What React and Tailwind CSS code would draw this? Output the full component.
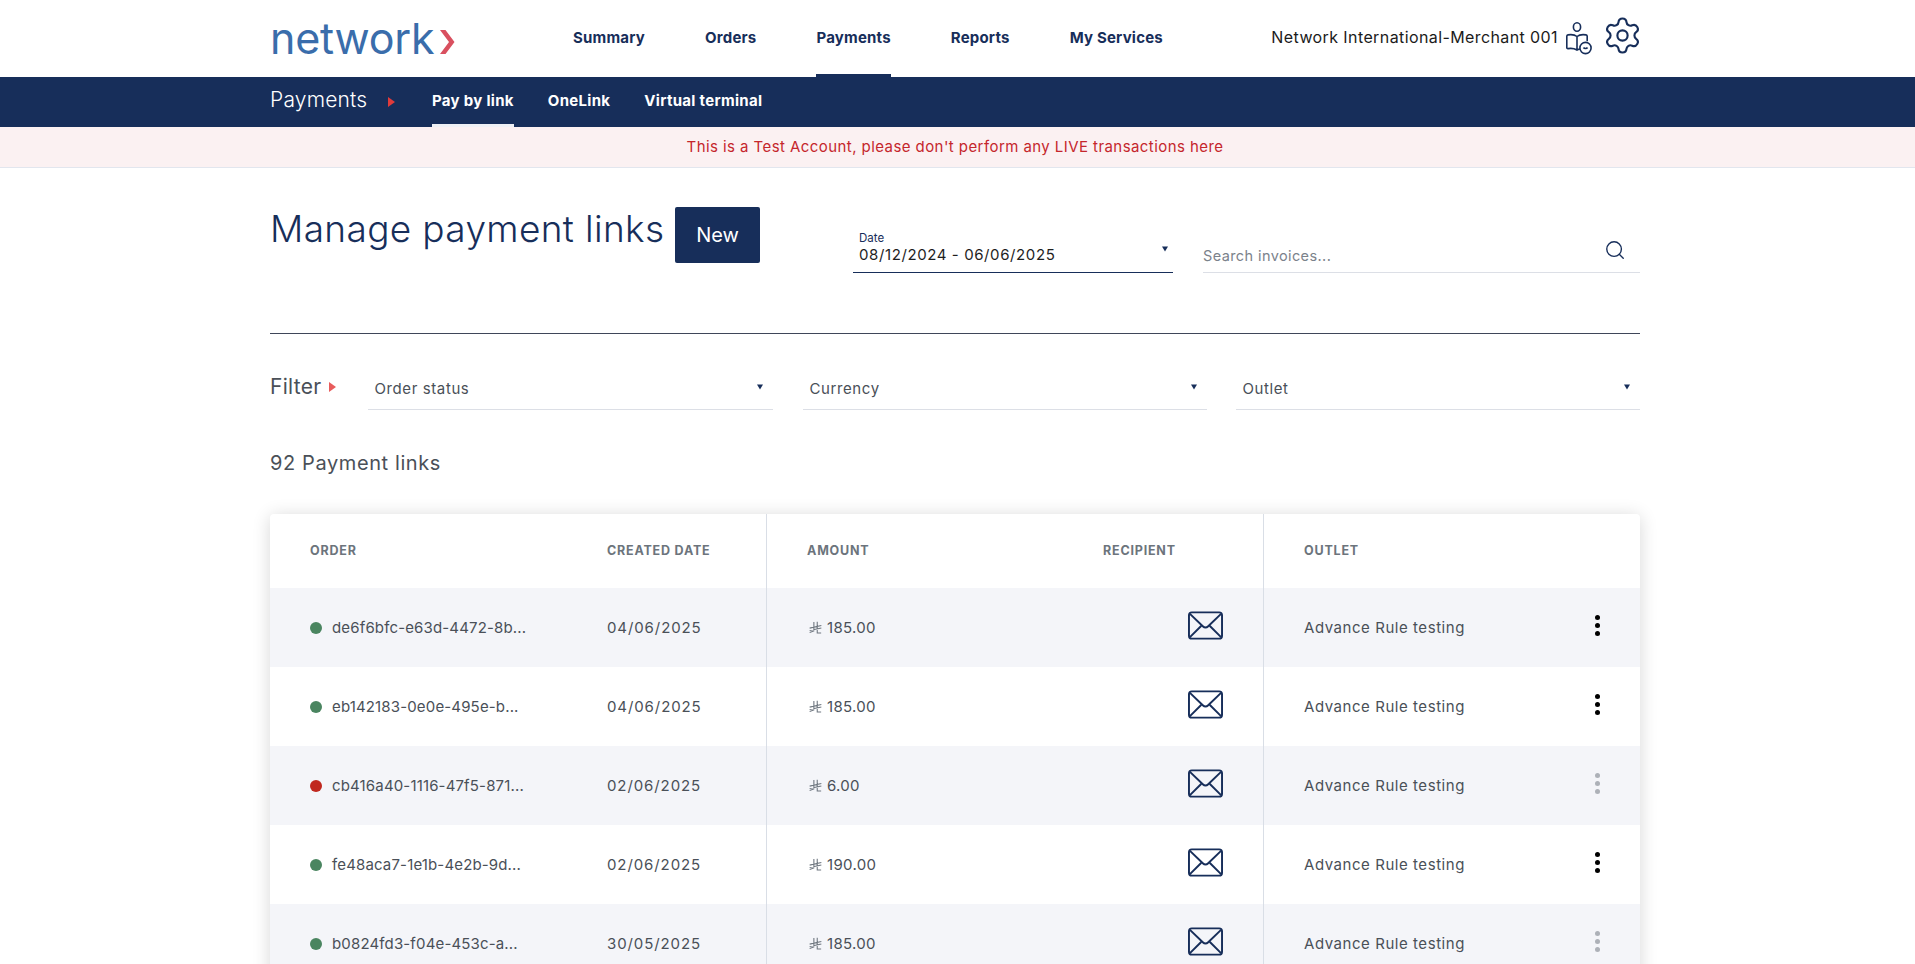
import React from 'react';
import { Search, Settings } from 'lucide-react';

const font = { fontFamily: 'Inter, "Noto Sans", sans-serif' };

const rows = [
  { id: 'de6f6bfc-e63d-4472-8b...', date: '04/06/2025', amount: '185.00', status: 'ok', active: true },
  { id: 'eb142183-0e0e-495e-b...', date: '04/06/2025', amount: '185.00', status: 'ok', active: true },
  { id: 'cb416a40-1116-47f5-871...', date: '02/06/2025', amount: '6.00', status: 'bad', active: false },
  { id: 'fe48aca7-1e1b-4e2b-9d...', date: '02/06/2025', amount: '190.00', status: 'ok', active: true },
  { id: 'b0824fd3-f04e-453c-a...', date: '30/05/2025', amount: '185.00', status: 'ok', active: false },
];

const Caret = () => (
  <svg width="6" height="6" viewBox="0 0 7 6" className="shrink-0">
    <path d="M0 0h7L3.5 6z" fill="#172e5a" />
  </svg>
);

const Arrow = ({ color }) => (
  <svg width="7" height="10" viewBox="0 0 7 10" className="shrink-0">
    <path d="M0 0l7 5-7 5z" fill={color} />
  </svg>
);

const Riyal = () => (
  <svg width="13" height="13" viewBox="0 0 12 12" fill="none" stroke="#6f7780" strokeWidth="1" className="shrink-0">
    <path d="M4.5 1v8.2L.6 10.6M7.6 .6v10.4h3.6M.6 6.6l10.8-2.4M.6 8.800l10.8-2.4" />
  </svg>
);

const Envelope = () => (
  <svg width="35" height="29" viewBox="0 0 36 29" fill="none" stroke="#172e5a" strokeWidth="2" strokeLinejoin="round">
    <rect x="1" y="1" width="34" height="27" rx="3" />
    <path d="M2 2.5l13.500 13a3.500 3.500 0 0 0 5 0L34 2.500M2 26.500l11.500-11.500M34 26.500L22.500 15" />
  </svg>
);

const UserBook = () => (
  <svg width="26" height="33" viewBox="0 0 26 33" fill="none" stroke="#172e5a" strokeWidth="1.6" className="mt-[2px]">
    <ellipse cx="11" cy="5" rx="3.6" ry="4.2" />
    <path d="M11 14.500c-2-1.600-5-2.200-9-1.600-.7.1-1.200.7-1.200 1.400v11.400c0 .6.6 1 1.200.9 3.400-.5 6.600 0 9 1.400 1.200-.7 2.600-1.100 4-1.300M11 14.500c2-1.600 5-2.200 9-1.600.7.1 1.200.7 1.200 1.400v5M11 14.500v13" />
    <circle cx="19.5" cy="26" r="5.6" fill="#fff" />
    <path d="M17.500 25.500c.8 1.400 3.200 1.400 4 0" />
  </svg>
);

const Kebab = ({ active }) => (
  <div className="flex flex-col gap-[3px]">
    <span className={`w-[5px] h-[5px] rounded-full ${active ? 'bg-black' : 'bg-[#adb1b8]'}`} />
    <span className={`w-[5px] h-[5px] rounded-full ${active ? 'bg-black' : 'bg-[#adb1b8]'}`} />
    <span className={`w-[5px] h-[5px] rounded-full ${active ? 'bg-black' : 'bg-[#adb1b8]'}`} />
  </div>
);

const Select = ({ label, className }) => (
  <div className={`flex items-center justify-between h-[47px] border-b border-[#dcdfe6] pt-[7px] pl-[6.5px] pr-[10px] ${className}`}>
    <span className="text-[15px] text-[#4a5058] tracking-[0.6px]">{label}</span>
    <span className="mb-[6px]"><Caret /></span>
  </div>
);

const App = () => {
  return (
    <div style={font} className="h-screen overflow-hidden bg-white">
      {/* Top nav */}
      <header className="h-[77px] pl-[270px] flex">
        <div className="w-[1370px] flex items-start">
          <div className="w-[303px] flex items-center h-[77px]">
            <span className="text-[43px] leading-none text-[#3a6dab] font-normal tracking-[-0.2px]">network</span>
            <svg width="15" height="24" viewBox="0 0 15 24" className="ml-[6px] mt-[6px]">
              <path d="M0 0h5.500l9 12-9 12H0l9-12z" fill="#d9505f" />
            </svg>
          </div>
          <nav className="flex gap-[60px] text-[15px] font-bold text-[#172e5a] tracking-[0.2px] h-[77px]">
            <a className="pt-[27px]">Summary</a>
            <a className="pt-[27px]">Orders</a>
            <a className="pt-[27px] border-b-[3px] border-[#172e5a]">Payments</a>
            <a className="pt-[27px]">Reports</a>
            <a className="pt-[27px]">My Services</a>
          </nav>
          <div className="ml-auto flex items-center h-[74px]">
            <span className="text-[16px] text-[#1b1b1b] tracking-[0.4px] mr-[8px]">Network International-Merchant 001</span>
            <UserBook />
            <Settings size={41} strokeWidth={1.25} color="#172e5a" className="ml-[10px] mr-[-3px] mb-[4px]" />
          </div>
        </div>
      </header>

      {/* Sub nav */}
      <div className="h-[50px] bg-[#172e5a] pl-[270px] flex text-white">
        <div className="flex items-center w-[162px] gap-[21px] pb-[5px]">
          <span className="text-[21px] font-light tracking-[0.2px]">Payments</span>
          <span className="mt-[5px]"><Arrow color="#e03b3b" /></span>
        </div>
        <a className="h-full flex items-center pt-[2px] text-[15px] font-bold tracking-[0.3px] border-b-[3px] border-[#eef0f5]">Pay by link</a>
        <a className="h-full flex items-center pt-[2px] pb-[3px] ml-[34px] text-[15px] font-bold tracking-[0.3px]">OneLink</a>
        <a className="h-full flex items-center pt-[2px] pb-[3px] ml-[34px] text-[15px] font-bold tracking-[0.3px]">Virtual terminal</a>
      </div>

      {/* Test account banner */}
      <div className="h-[41px] w-[1915px] pr-[5px] bg-[#fbf1f2] border-b border-[#e2e6ee] flex items-center justify-center">
        <span className="text-[15px] leading-[20px] mb-[1px] text-[#c5262c] tracking-[0.43px]">This is a Test Account, please don't perform any LIVE transactions here</span>
      </div>

      <main className="ml-[270px] w-[1370px]">
        {/* Title row */}
        <div className="flex items-start h-[166px] border-b border-[#3f4659] pt-[39px]">
          <h1 className="text-[37px] leading-[44px] font-light text-[#172e5a] tracking-[0.35px] w-[405px]">Manage payment links</h1>
          <button className="w-[85px] h-[56px] rounded-[2px] bg-[#172e5a] text-white text-[20px]">New</button>
          <div className="ml-[93px] w-[320px] h-[66px] border-b border-[#172e5a] pl-[6px] pr-[5px] pt-[25px]">
            <div className="text-[11.5px] leading-[13px] text-[#172e5a]">Date</div>
            <div className="flex justify-between">
              <span className="text-[15px] leading-[19px] text-[#1e1e1e] tracking-[0.6px]">08/12/2024 - 06/06/2025</span>
              <span className="mt-[1px]"><Caret /></span>
            </div>
          </div>
          <div className="ml-[30px] flex-1 h-[66px] border-b border-[#dcdfe6] flex justify-between pt-[38px]">
            <span className="text-[14.5px] leading-[22px] text-[#7b828b] tracking-[0.4px]">Search invoices...</span>
            <Search size={22} strokeWidth={1.5} color="#172e5a" className="mr-[14px] mt-[-6px]" />
          </div>
        </div>

        {/* Filters */}
        <div className="flex items-start mt-[29px]">
          <div className="w-[98px] flex items-center gap-[7px] mt-[12px]">
            <span className="text-[21px] leading-[24px] text-[#4a5058] tracking-[0.3px]">Filter</span>
            <Arrow color="#e85c5c" />
          </div>
          <Select label="Order status" className="w-[405px]" />
          <Select label="Currency" className="w-[404px] ml-[30px]" />
          <Select label="Outlet" className="w-[404px] ml-[29px]" />
        </div>

        <div className="text-[20px] leading-[24px] text-[#4a5058] mt-[41px] tracking-[0.6px]">92 Payment links</div>

        {/* Table */}
        <div className="mt-[39px] rounded-[4px] bg-white shadow-[0_2px_18px_rgba(0,0,0,0.16)]">
          <div className="grid grid-cols-[496px_497px_377px] h-[74px] text-[12.5px] font-bold text-[#6c747c] tracking-[0.8px]">
            <div className="flex items-center pl-[40px]">
              <span className="w-[297px]">ORDER</span>
              <span>CREATED DATE</span>
            </div>
            <div className="flex items-center pl-[40px] border-l border-[#d9dee6]">
              <span className="w-[296px]">AMOUNT</span>
              <span>RECIPIENT</span>
            </div>
            <div className="flex items-center pl-[40px] border-l border-[#d9dee6]">OUTLET</div>
          </div>
          {rows.map((row, i) => (
            <div key={row.id} className={`grid grid-cols-[496px_497px_377px] h-[79px] text-[15px] text-[#4a5058] ${i % 2 === 0 ? 'bg-[#f4f5f9]' : 'bg-white'}`}>
              <div className="flex items-center pl-[40px]">
                <div className="w-[297px] flex items-center gap-[10px]">
                  <span className={`w-[12px] h-[12px] rounded-full ${row.status === 'ok' ? 'bg-[#4a8560]' : 'bg-[#c0281f]'}`} />
                  <span className="tracking-[0.15px] mt-[1px]">{row.id}</span>
                </div>
                <span className="tracking-[0.9px] mt-[1px]">{row.date}</span>
              </div>
              <div className="flex items-center pl-[42px] border-l border-[#d9dee6]">
                <Riyal />
                <span className="ml-[5px] tracking-[0.3px] mt-[1px]">{row.amount}</span>
                <div className="ml-auto mr-[40px] mb-[4px]"><Envelope /></div>
              </div>
              <div className="flex items-center pl-[40px] pr-[40px] justify-between border-l border-[#d9dee6]">
                <span className="tracking-[0.55px] mt-[1px]">Advance Rule testing</span>
                <div className="mb-[4px]"><Kebab active={row.active} /></div>
              </div>
            </div>
          ))}
        </div>
      </main>
    </div>
  );
};

export default App;
